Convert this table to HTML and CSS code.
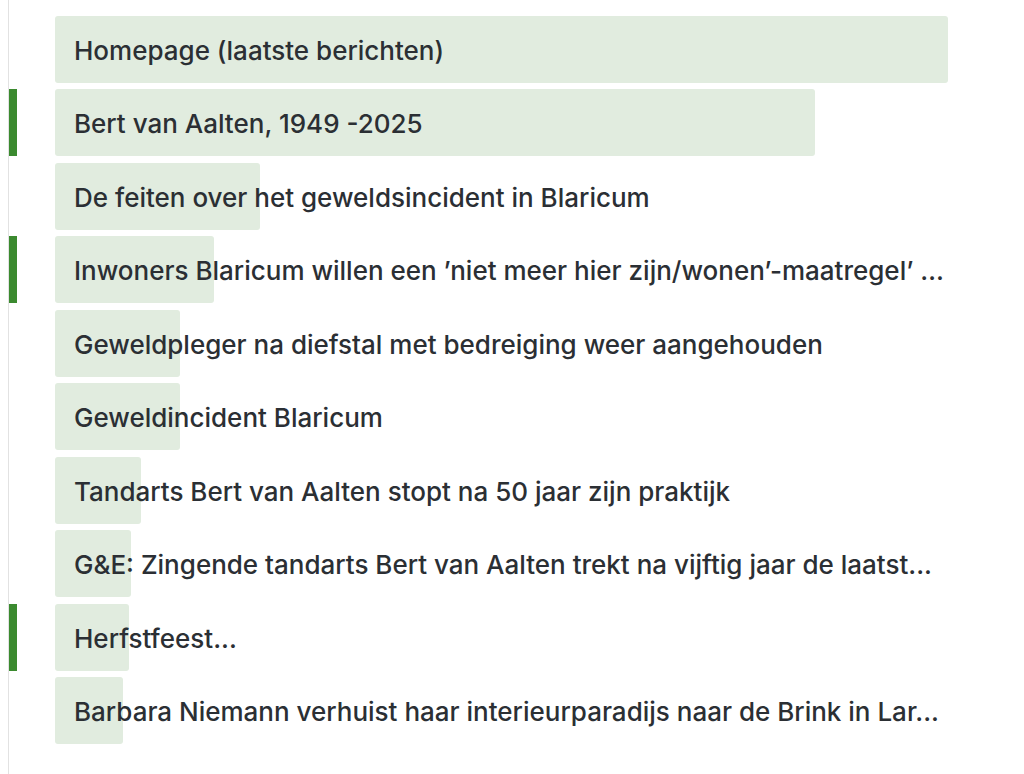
FILE: index.html
```html
<!DOCTYPE html>
<html lang="nl">
<head>
<meta charset="utf-8">
<title>Pagina's</title>
<link rel="stylesheet" href="styles.css">
</head>
<body>
<div class="panel">
  <ul class="list">
    <li class="row"><span class="mark"></span><div class="item"><span class="bar" style="width:100%"></span><span class="label">Homepage (laatste berichten)</span></div></li>
    <li class="row"><span class="mark on"></span><div class="item"><span class="bar" style="width:85.1%"></span><span class="label">Bert van Aalten, 1949 -2025</span></div></li>
    <li class="row"><span class="mark"></span><div class="item"><span class="bar" style="width:22.96%"></span><span class="label">De feiten over het geweldsincident in Blaricum</span></div></li>
    <li class="row"><span class="mark on"></span><div class="item"><span class="bar" style="width:17.8%"></span><span class="label">Inwoners Blaricum willen een ’niet meer hier zijn/wonen’-maatregel’ …</span></div></li>
    <li class="row"><span class="mark"></span><div class="item"><span class="bar" style="width:14%"></span><span class="label">Geweldpleger na diefstal met bedreiging weer aangehouden</span></div></li>
    <li class="row"><span class="mark"></span><div class="item"><span class="bar" style="width:14%"></span><span class="label">Geweldincident Blaricum</span></div></li>
    <li class="row"><span class="mark"></span><div class="item"><span class="bar" style="width:9.63%"></span><span class="label">Tandarts Bert van Aalten stopt na 50 jaar zijn praktijk</span></div></li>
    <li class="row"><span class="mark"></span><div class="item"><span class="bar" style="width:8.5%"></span><span class="label">G&amp;E: Zingende tandarts Bert van Aalten trekt na vijftig jaar de laatst...</span></div></li>
    <li class="row"><span class="mark on"></span><div class="item"><span class="bar" style="width:8.29%"></span><span class="label">Herfstfeest...</span></div></li>
    <li class="row"><span class="mark"></span><div class="item"><span class="bar" style="width:7.6%"></span><span class="label">Barbara Niemann verhuist haar interieurparadijs naar de Brink in Lar...</span></div></li>
  </ul>
</div>
</body>
</html>
```

FILE: styles.css
```css
html, body {
  margin: 0;
  padding: 0;
  background: #ffffff;
}
body {
  font-family: Inter, "Liberation Sans", sans-serif;
  color: #2b2f34;
}
.panel {
  margin-left: 8px;
  border-left: 1px solid #e2e2e2;
  min-height: 774px;
  box-sizing: border-box;
  padding-top: 16px;
}
.list {
  list-style: none;
  margin: 0;
  padding: 0;
  display: flex;
  flex-direction: column;
  gap: 6.45px;
}
.row {
  display: flex;
  height: 67px;
}
.mark {
  width: 8px;
  flex: none;
}
.mark.on {
  background: #3b8a2f;
}
.item {
  position: relative;
  margin-left: 38px;
  width: 893px;
  display: flex;
  align-items: center;
}
.bar {
  position: absolute;
  left: 0;
  top: 0;
  bottom: 0;
  background: #e1ecdf;
  border-radius: 3px;
}
.label {
  position: relative;
  padding-left: 19px;
  padding-top: 2px;
  font-size: 26px;
  font-weight: 500;
  white-space: nowrap;
}
```
